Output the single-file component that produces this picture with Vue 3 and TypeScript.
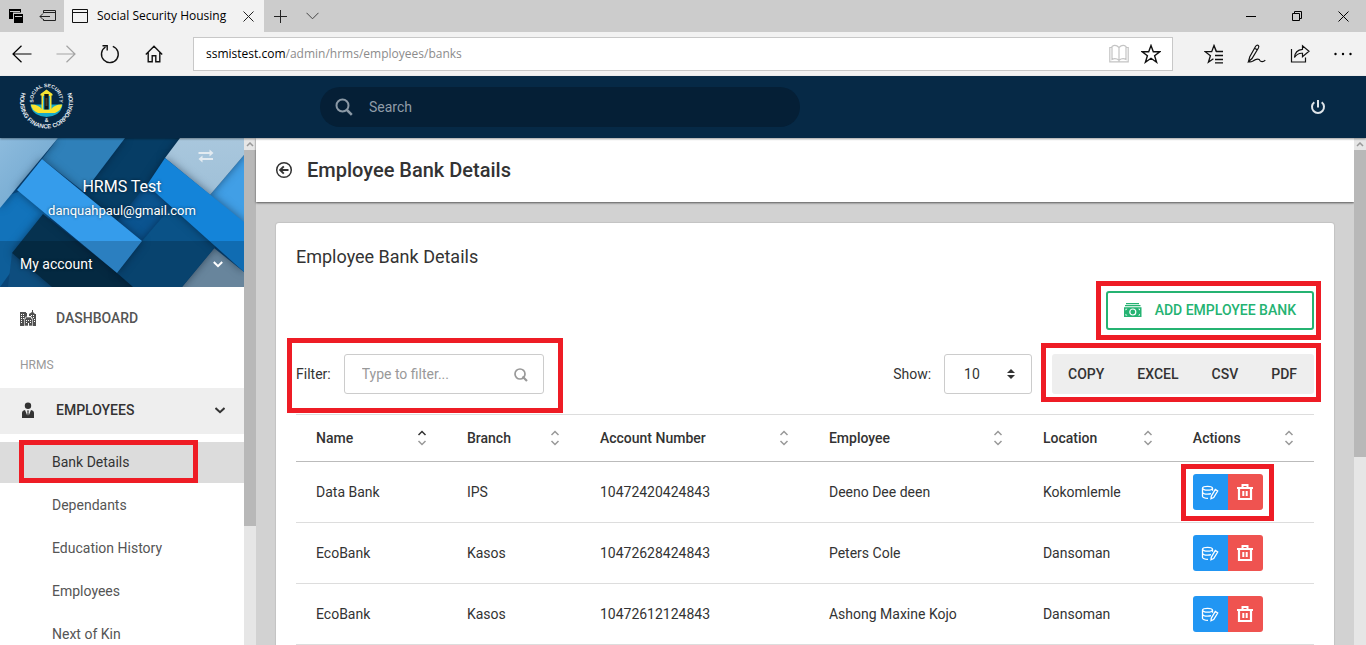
<script setup lang="ts">
import { ref } from 'vue'

interface Column { key: string; label: string; size: string; sorted?: boolean }
interface BankRow { name: string; branch: string; account: string; employee: string; location: string }

const columns: Column[] = [
  { key: 'name', label: 'Name', size: 'c-name', sorted: true },
  { key: 'branch', label: 'Branch', size: 'c-branch' },
  { key: 'account', label: 'Account Number', size: 'c-account' },
  { key: 'employee', label: 'Employee', size: 'c-employee' },
  { key: 'location', label: 'Location', size: 'c-location' },
  { key: 'actions', label: 'Actions', size: 'c-actions' },
]

const rows: BankRow[] = [
  { name: 'Data Bank', branch: 'IPS', account: '10472420424843', employee: 'Deeno Dee deen', location: 'Kokomlemle' },
  { name: 'EcoBank', branch: 'Kasos', account: '10472628424843', employee: 'Peters Cole', location: 'Dansoman' },
  { name: 'EcoBank', branch: 'Kasos', account: '10472612124843', employee: 'Ashong Maxine Kojo', location: 'Dansoman' },
]

const subItems: string[] = ['Bank Details', 'Dependants', 'Education History', 'Employees', 'Next of Kin']
const exportsList: string[] = ['Copy', 'Excel', 'CSV', 'PDF']
const filter = ref('')
const search = ref('')
const pageSize = ref('10')
</script>

<template>
  <div class="window">
    <div class="tabbar">
      <button class="tb-btn first" aria-label="Tabs you have set aside">
        <svg width="16" height="16" viewBox="0 0 16 16"><path d="M1 1h12v3.500H5V11H1z" /><path d="M6 6h9v9H6z" /><path d="M2 3.500h10M7 8.500h7" stroke="#ccc" stroke-width="1" /></svg>
      </button>
      <button class="tb-btn second" aria-label="Set these tabs aside">
        <svg width="18" height="14" viewBox="0 0 18 14" fill="none" stroke="#222"><path d="M4.500 4V1.500h12v10h-12V10M4.500 3.500h12M1 7.500h10M4 4.500l-3 3 3 3" /></svg>
      </button>
      <div class="tab">
        <svg width="16" height="14" viewBox="0 0 16 14" fill="none" stroke="#111"><path d="M.5.5h15v13H.5zM.5 3.500h15" /></svg>
        <span class="tab-title">Social Security Housing</span>
        <button class="tab-close" aria-label="Close tab">
          <svg width="11" height="11" viewBox="0 0 11 11" stroke="#222"><path d="M.5.5l10 10M10.500.5l-10 10" /></svg>
        </button>
      </div>
      <button class="tb-btn plus" aria-label="New tab">
        <svg width="13" height="13" viewBox="0 0 13 13" stroke="#222"><path d="M0 6.500h13M6.500 0v13" /></svg>
      </button>
      <button class="tb-btn plus" aria-label="Tab previews">
        <svg width="13" height="8" viewBox="0 0 13 8" fill="none" stroke="#444"><path d="M.5.8l6 6 6-6" /></svg>
      </button>
      <div class="win-controls">
        <button aria-label="Minimize"><svg width="10" height="10" viewBox="0 0 10 10" stroke="#000"><path d="M0 5.500h10" /></svg></button>
        <button aria-label="Restore"><svg width="10" height="10" viewBox="0 0 10 10" fill="none" stroke="#000"><path d="M.5 2.500h7v7h-7zM2.500 2.500v-2h7v7h-2" /></svg></button>
        <button aria-label="Close"><svg width="11" height="11" viewBox="0 0 11 11" stroke="#000"><path d="M.5.5l10 10M10.500.5l-10 10" /></svg></button>
      </div>
    </div>

    <div class="toolbar">
      <div class="nav-btns">
        <button aria-label="Back"><svg width="20" height="18" viewBox="0 0 20 18" fill="none" stroke="#000" stroke-width="1.2"><path d="M19.500 9H1M9.500 .8L1 9l8.500 8.200" /></svg></button>
        <button aria-label="Forward"><svg width="20" height="18" viewBox="0 0 20 18" fill="none" stroke="#a3a3a3" stroke-width="1.2"><path d="M.5 9H19M10.500 .8L19 9l-8.500 8.200" /></svg></button>
        <button aria-label="Refresh"><svg width="20" height="20" viewBox="0 0 20 20" fill="none" stroke="#111" stroke-width="1.400"><path d="M12.800 2.300A8.400 8.400 0 1 1 5.500 3M2.500 1.700h4.700v4.800" /></svg></button>
        <button aria-label="Home"><svg width="18" height="18" viewBox="0 0 18 18" fill="none" stroke="#111" stroke-width="1.400"><path d="M.8 9.500L9 1.300l8.200 8.200M3.200 7.500v9.300h4v-6h3.600v6h4V7.500" /></svg></button>
      </div>
      <div class="url-box">
        <span class="url"><b>ssmistest.com</b>/admin/hrms/employees/banks</span>
        <button aria-label="Reading view"><svg width="20" height="20" viewBox="0 0 20 20" fill="none" stroke="#c4c4c4" stroke-width="1.200"><path d="M10 3.500Q6.500 0 3 2.500v13q3.500-2 7 .8 3.500-2.800 7-.8v-13Q13.500 0 10 3.500zM10 3.500v14M3 3.500H.8v14.300h18.400V3.500H17" /></svg></button>
        <button aria-label="Add to favorites"><svg width="20" height="20" viewBox="0 0 20 20" fill="none" stroke="#111" stroke-width="1.400"><path d="M10 1.500l2.300 6.200h6.500l-5.200 4 2 6.500L10 14.300l-5.600 3.900 2-6.500-5.200-4h6.500z" /></svg></button>
      </div>
      <div class="right-btns">
        <button aria-label="Hub"><svg width="20" height="20" viewBox="0 0 20 20" fill="none" stroke="#111" stroke-width="1.300"><path d="M19 7.500h-6.500L10 1.500 7.700 7.700H1.200l5.200 4-2 6.500 5-3.400M11 11.500h8M11 15.500h8M11 18.900h8M10 1.500l2.300 6.200" /></svg></button>
        <button aria-label="Notes"><svg width="20" height="20" viewBox="0 0 20 20" fill="none" stroke="#111" stroke-width="1.200"><path d="M1.500 17.500l1.300-4.800L8.500 2.500Q10 .5 11.300 1.500q1 .8.1 2.500L5 14.500zM8 4.500l2.300 1.300M1.500 17.500Q3 18.500 6 17q4-3 6.300-1.400.8 2.200 3 2 1.500 0 3-1.500" /></svg></button>
        <button aria-label="Share"><svg width="20" height="20" viewBox="0 0 20 20" fill="none" stroke="#111" stroke-width="1.200"><path d="M1.500 5v13h14v-4.500M4.500 13.500q.5-7.500 8-8.200V1.800l6.500 5.500-6.500 5.500V9.300q-5-.5-8 4.200z" /></svg></button>
        <button aria-label="More"><svg width="20" height="20" viewBox="0 0 20 20" fill="#000"><circle cx="2.500" cy="10" r="1.200" /><circle cx="10" cy="10" r="1.200" /><circle cx="17.500" cy="10" r="1.200" /></svg></button>
      </div>
    </div>

    <header class="app-header">
      <a href="#" class="logo" aria-label="Social Security and Housing Finance Corporation">
        <svg width="56" height="56" viewBox="0 0 56 56">
          <defs>
            <path id="ring-in" d="M18.500 29.300A13 13 0 1 1 38.500 29.300" />
            <path id="ring-out" d="M5.400 10A26.500 26.500 0 1 0 51.600 10" />
          </defs>
          <g class="logo-text">
            <text font-size="5"><textPath href="#ring-in" startOffset="50%" text-anchor="middle">SOCIAL SECURITY</textPath></text>
            <text font-size="6"><textPath href="#ring-out" startOffset="50%" text-anchor="middle">HOUSING FINANCE CORPORATION</textPath></text>
            <text x="28.500" y="43" font-size="5" text-anchor="middle">&amp;</text>
          </g>
          <path d="M12.500 25.500h32q-.5 6-5.500 9.500-5 3-10.500 3T18 35q-5-3.500-5.500-9.500z" fill="#18a9c9" />
          <path d="M12.800 25.500q7-.5 11 4.500h9.400q4-5 11-4.500-1 6-7.200 8.500h-17q-6.200-2.500-7.200-8.500z" fill="#fbe32b" />
          <path d="M22.500 15l6-4.500 6 4.500v1.500h-1v14h-10v-14h-1z" fill="#f3e334" />
          <path d="M25 17h7v13.500h-7z" fill="#37b4cc" />
          <path d="M26.300 15h4.400v15.500h-4.400z" fill="#10151a" />
          <path d="M27.500 19h2v8h-2z" fill="#4a3a22" />
        </svg>
      </a>
      <label class="search">
        <svg width="18" height="18" viewBox="0 0 18 18" fill="none" stroke="#8b99a6"><circle cx="7.500" cy="7.500" r="6" stroke-width="2" /><path d="M12 12l4.800 4.800" stroke-width="2.500" /></svg>
        <input v-model="search" type="text" placeholder="Search" aria-label="Search" />
      </label>
      <button class="power" aria-label="Log out">
        <svg width="16" height="16" viewBox="0 0 16 16" fill="none" stroke="#dfe5ea" stroke-width="2"><path d="M8 1v7.500M4.300 3.200a6 6 0 1 0 7.400 0" /></svg>
      </button>
    </header>

    <div class="body">
      <aside class="sidebar">
        <div class="profile">
          <svg class="pattern" viewBox="0 0 244 149" preserveAspectRatio="none" aria-hidden="true">
            <defs>
              <linearGradient id="g-light" x1="0" y1="0" x2="1" y2="1"><stop offset="0" stop-color="#8dbbdd" /><stop offset="1" stop-color="#6ba3cc" /></linearGradient>
              <linearGradient id="g-steel" x1="0" y1="0" x2="0" y2="1"><stop offset="0" stop-color="#a9c7dd" /><stop offset="1" stop-color="#9fc0d8" /></linearGradient>
            </defs>
            <rect width="244" height="149" fill="#0b5490" />
            <polygon points="0,60 30,50 50,80 0,149" fill="#1273bb" />
            <polygon points="12,115 60,149 8,149" fill="#125f9a" />
            <polygon points="125,0 182,0 150,42 113,88 80,60" fill="#063d65" class="sh" />
            <polygon points="58,0 125,0 84,54 42,21" fill="#2f80b9" class="sh" />
            <polygon points="0,0 58,0 0,70" fill="url(#g-light)" class="sh" />
            <polygon points="244,17 244,86 210,57" fill="#419fe6" />
            <polygon points="180,0 244,0 244,17 210,57 165,20" fill="url(#g-steel)" class="sh" />
            <polygon points="43,76 12,115 52,149 135,149" fill="#063250" class="sh" />
            <polygon points="214,110 244,134 244,149 182,149" fill="#7fa3bf" />
            <polygon points="172,68 217,107 182,149 133,149 117,135 142,103" fill="#0a5287" class="sh" />
            <polygon points="165,20 244,84 244,134 147,47" fill="#1484d9" class="sh" />
            <polygon points="42,21 142,103 117,135 17,52" fill="#359ceb" class="sh" />
          </svg>
          <div class="profile-top">
            <button class="swap" aria-label="Switch account">
              <svg width="16" height="14" viewBox="0 0 16 14" fill="#e3ebf1"><path d="M.5 3h11V.5L15.500 4l-4 3.500V5H.5zM15 9H4.500V6.500L.5 10l4 3.500V11H15z" /></svg>
            </button>
            <div class="user-name">HRMS Test</div>
            <div class="user-mail">danquahpaul@gmail.com</div>
          </div>
          <button class="account">
            <span>My account</span>
            <svg width="10" height="7" viewBox="0 0 10 7" fill="none" stroke="#fff" stroke-width="2"><path d="M.8 1L5 5.200 9.200 1" /></svg>
          </button>
        </div>

        <nav class="menu">
          <a href="#" class="item">
            <svg width="16" height="16" viewBox="0 0 16 16" fill="#505050"><path d="M0 2h6v1h1v5H5v8H0zM12 0h1v2l2 2h1v12h-4V7h-1V6H9V4l3-2z" /><path d="M5.500 8.500V7h6v1.500h1V16h-8V8.500z" stroke="#fff" stroke-width=".6" /><path d="M1 4h1v1H1zM3 4h1v1H3zM1 6h1v1H1zM3 6h1v1H3zM1 8h1v1H1zM3 8h1v1H3zM1 10h1v1H1zM1 12h1v1H1zM11 5h1v1h-1zM13 5h1v1h-1zM13 7h1v1h-1zM14 9h1v1h-1zM14 11h1v1h-1zM6 10h1v1H6zM8 10h1v1H8zM10 10h1v1h-1zM6 12h1v1H6zM10 12h1v1h-1zM8 13h1v3H8z" fill="#fff" /></svg>
            <span>DASHBOARD</span>
          </a>
          <div class="group-title">HRMS</div>
          <a href="#" class="item open">
            <svg width="16" height="16" viewBox="0 0 16 16" fill="#333"><circle cx="8" cy="3.700" r="3.200" /><path d="M2 16v-5q0-2.500 3-3l2.200 5.500L7.500 10 7 8.500h2L8.500 10l.3 3.500L11 8q3 .5 3 3v5z" /></svg>
            <span>EMPLOYEES</span>
            <svg class="chev" width="10" height="7" viewBox="0 0 10 7" fill="none" stroke="#333" stroke-width="2"><path d="M.5 1L5 5.200 9.500 1" /></svg>
          </a>
          <ul class="submenu">
            <li v-for="(s, i) in subItems" :key="s">
              <a href="#" :class="{ active: i === 0, marked: i === 0 }">{{ s }}</a>
            </li>
          </ul>
        </nav>
      </aside>
      <div class="scrollbar" aria-hidden="true">
        <div class="sb-up"><svg width="8" height="5" viewBox="0 0 8 5" fill="none" stroke="#999" stroke-width="1.500"><path d="M1 4l3-3 3 3" /></svg></div>
        <div class="sb-track"><div class="sb-thumb side"></div></div>
      </div>

      <main class="main">
        <div class="page-head">
          <a href="#" aria-label="Back to previous page">
            <svg width="18" height="18" viewBox="0 0 18 18" fill="none" stroke="#333"><circle cx="9" cy="9" r="7.300" stroke-width="1.500" /><path d="M13.500 9H5.500M8.800 5.300L5.100 9l3.700 3.700" stroke-width="1.900" /></svg>
          </a>
          <h1>Employee Bank Details</h1>
        </div>
        <section class="card">
          <h2>Employee Bank Details</h2>
          <div class="add-row">
            <div class="callout add-mark">
              <button class="add-btn">
                <svg width="18" height="14" viewBox="0 0 18 14" fill="#25b372"><path d="M2 0h13v1.200H2zM1 2h15.500v1.200H1zM0 4.200h17.500V14H0z" /><circle cx="8.800" cy="9" r="3" fill="none" stroke="#fff" stroke-width="1.200" /><path d="M1.500 5.700h2L1.500 7.500zM16 5.700h-2l2 1.800zM1.500 12.500h2l-2-1.800zM16 12.500h-2l2-1.800z" fill="#fff" /></svg>
                <span>ADD EMPLOYEE BANK</span>
              </button>
            </div>
          </div>
          <div class="controls">
            <label class="callout filter filter-mark">
              <span>Filter:</span>
              <span class="filter-box">
                <input v-model="filter" type="text" placeholder="Type to filter..." />
                <svg width="14" height="14" viewBox="0 0 14 14" fill="none" stroke="#999"><circle cx="6" cy="6" r="5" stroke-width="1.700" /><path d="M8.500 8.500l4.500 4.500" stroke-width="2.200" /></svg>
              </span>
            </label>
            <div class="controls-right">
              <label class="show">
                <span>Show:</span>
                <span class="select-box">
                  <select v-model="pageSize"><option>10</option><option>25</option><option>50</option></select>
                  <svg width="8" height="10" viewBox="0 0 8 10" fill="#333"><path d="M0 4l4-4 4 4zM0 6h8l-4 4z" /></svg>
                </span>
              </label>
              <div class="callout exports export-mark">
                <button v-for="e in exportsList" :key="e">{{ e }}</button>
              </div>
            </div>
          </div>
          <table>
            <colgroup><col v-for="c in columns" :key="c.key" :class="c.size" /></colgroup>
            <thead>
              <tr>
                <th v-for="c in columns" :key="c.key" scope="col">
                  <button class="sort">
                    <span>{{ c.label }}</span>
                    <svg width="10" height="16" viewBox="0 0 10 16" fill="none" stroke="#999" stroke-width="1.500"><path d="M1.500 5L5 1.500 8.500 5" :class="{ on: c.sorted }" /><path d="M1.500 11L5 14.500 8.500 11" /></svg>
                  </button>
                </th>
              </tr>
            </thead>
            <tbody>
              <tr v-for="(r, i) in rows" :key="r.account">
                <td>{{ r.name }}</td>
                <td>{{ r.branch }}</td>
                <td>{{ r.account }}</td>
                <td>{{ r.employee }}</td>
                <td>{{ r.location }}</td>
                <td>
                  <div class="actions" :class="{ callout: i === 0, 'action-mark': i === 0 }">
                    <button class="edit" aria-label="Edit">
                      <svg width="18" height="16" viewBox="0 0 18 16" fill="none" stroke="#fff" stroke-width="1.300"><ellipse cx="6.500" cy="4.300" rx="5" ry="1.900" /><path d="M1.500 4.300v8q.5 1.900 5.500 2M11.500 4.300v2.500M1.500 8.300q.8 1.900 5 1.900 2 0 3.500-.5M10 14.800l.3-2.700 4-6.600 2.400 1.500-4 6.600z" /></svg>
                    </button>
                    <button class="del" aria-label="Delete">
                      <svg width="16" height="16" viewBox="0 0 16 16" fill="none" stroke="#fff"><path d="M0 4h16M5.500 3.500v-2.500h5V3.500" stroke-width="2" /><path d="M2 4v11h12V4" stroke-width="2.200" /><path d="M6.300 7v5M9.700 7v5" stroke-width="2" /></svg>
                    </button>
                  </div>
                </td>
              </tr>
            </tbody>
          </table>
        </section>
      </main>
      <div class="scrollbar" aria-hidden="true">
        <div class="sb-up"><svg width="8" height="5" viewBox="0 0 8 5" fill="none" stroke="#999" stroke-width="1.500"><path d="M1 4l3-3 3 3" /></svg></div>
        <div class="sb-track"><div class="sb-thumb page"></div></div>
      </div>
    </div>
  </div>
</template>

<style>
body { background: #d2d2d2; }
</style>

<style scoped>
* { box-sizing: border-box; }
button { border: 0; background: none; padding: 0; font: inherit; color: inherit; cursor: pointer; }
a { color: inherit; text-decoration: none; }
svg { display: block; flex: none; }
.window { height: 100vh; display: flex; flex-direction: column; overflow: hidden; font: 14px/20px Roboto, "Liberation Sans", sans-serif; color: #333; }

.tabbar { flex: none; height: 32px; display: flex; background: #ccc; font: 12px/16px "Open Sans", "Noto Sans", sans-serif; color: #000; }
.tb-btn { display: flex; align-items: center; justify-content: center; width: 32px; }
.tab { display: flex; align-items: center; width: 200px; padding: 0 10px 0 8px; background: #f2f2f2; }
.tab-title { flex: 1; margin-left: 9px; white-space: nowrap; overflow: hidden; }
.win-controls { margin-left: auto; display: flex; }
.win-controls button { width: 46px; display: flex; align-items: center; justify-content: center; }

.toolbar { flex: none; height: 44px; display: flex; align-items: center; background: #f2f2f2; font: 12px/16px "Open Sans", "Noto Sans", sans-serif; }
.nav-btns, .right-btns { display: flex; }
.nav-btns { padding: 0 17px 0 0; }
.nav-btns button { width: 44px; display: flex; justify-content: center; align-items: center; }
.right-btns { padding: 0 2px 0 19px; }
.right-btns button { width: 43px; display: flex; justify-content: center; }
.url-box { flex: 1; height: 34px; display: flex; align-items: center; gap: 12px; padding: 0 11px 0 12px; background: #fff; border: 1px solid #c8c8c8; }
.url { flex: 1; padding-bottom: 1px; color: #8c8c8c; }
.url b { font-weight: 400; color: #000; }

.app-header { flex: none; height: 62px; display: flex; align-items: center; padding: 0 40px 0 18px; background: #062946; position: relative; box-shadow: 0 1px 2px rgba(0, 0, 0, .4); z-index: 1; }
.logo-text { fill: #e6edf2; font-family: "Liberation Sans", sans-serif; font-weight: 700; }
.search { display: flex; align-items: center; gap: 16px; width: 480px; height: 40px; margin-left: 246px; padding: 0 15px; border-radius: 20px; background: #051f36; }
.search input { flex: 1; min-width: 0; border: 0; outline: 0; background: none; padding: 0; font: inherit; color: #fff; }
.search input::placeholder { color: #909ca8; opacity: 1; }
.power { margin-left: auto; }

.body { flex: 1; min-height: 0; display: flex; }
.sidebar { flex: none; width: 244px; overflow: hidden; background: #fff; }
.profile { position: relative; color: #fff; text-shadow: 0 0 3px rgba(0, 0, 0, .6); }
.pattern { position: absolute; inset: 0; width: 100%; height: 100%; }
.sh { filter: drop-shadow(0 0 4px rgba(0, 15, 35, .5)); }
.profile-top { position: relative; height: 103px; text-align: center; }
.swap { display: block; margin-left: 198px; padding-top: 11px; }
.user-name { margin-top: 12px; font-size: 16px; line-height: 24px; }
.user-mail { margin-top: 2px; font-size: 13px; line-height: 20px; }
.account { position: relative; display: flex; align-items: center; justify-content: space-between; width: 100%; height: 46px; padding: 0 21px 0 20px; background: rgba(0, 0, 0, .18); text-shadow: inherit; }
.menu { padding-top: 8px; }
.item { display: flex; align-items: center; gap: 20px; height: 46px; padding: 0 19px 0 20px; font-weight: 500; color: #555; }
.item.open { padding-bottom: 2px; background: #eee; color: #333; }
.chev { margin-left: auto; }
.group-title { height: 47px; padding-left: 20px; font-size: 12px; line-height: 48px; color: #999; }
.submenu { list-style: none; margin: 0; padding: 8px 0; }
.submenu li { margin-bottom: 2px; }
.submenu a { display: flex; align-items: center; height: 41px; padding: 0 0 2px 52px; color: #555; position: relative; }
.submenu a.active { background: #dcdcdc; color: #333; }

.scrollbar { flex: none; width: 12px; display: flex; flex-direction: column; background: #e6e6e6; }
.sb-up { height: 12px; display: flex; align-items: center; justify-content: center; }
.sb-track { flex: 1; }
.sb-thumb { background: #b8b8b8; }
.side { height: 76%; }
.page { height: 62%; }

.main { flex: 1; min-width: 0; display: flex; flex-direction: column; background: #d2d2d2; }
.page-head { flex: none; height: 64px; display: flex; align-items: center; gap: 14px; padding-left: 19px; background: #fff; box-shadow: 0 1px 2px rgba(0, 0, 0, .6); }
h1 { margin: 0; font-size: 20px; line-height: 24px; font-weight: 500; }
.card { flex: 1 0 auto; margin: 21px 20px 0; padding: 20px; background: #fff; border-radius: 3px 3px 0 0; box-shadow: 0 0 1px 1px rgba(0, 0, 0, .07); }
h2 { margin: 0 0 20px; font-size: 18px; line-height: 28px; font-weight: 400; }

.callout { position: relative; }
.callout::after, .marked::after { content: ""; position: absolute; border: 5px solid #ee1c25; pointer-events: none; z-index: 2; }
.add-mark::after { inset: -10px -7px -10px -10px; }
.filter-mark::after { inset: -16px -19px -19px -9px; }
.export-mark::after { inset: -11px -7px -8px -11px; }
.action-mark::after { inset: -10px -11px -11px -12px; }
.marked::after { inset: -2px 46px 0 19px; }

.add-row { display: flex; justify-content: flex-end; }
.add-btn { display: flex; align-items: center; gap: 13px; height: 39px; padding: 0 16px 1px; border: 2px solid #25b372; border-radius: 3px; color: #25b372; font-weight: 500; }
.controls { display: flex; justify-content: space-between; margin: 24px 0 20px; }
.filter, .show { display: flex; align-items: center; gap: 13px; }
.filter-box, .select-box { position: relative; display: block; }
.filter-box input { display: block; width: 200px; height: 40px; padding: 0 36px 0 17px; border: 1px solid #ccc; border-radius: 3px; background: #fff; font: inherit; color: #333; }
.filter-box input::placeholder { color: #999; opacity: 1; }
.filter-box svg { position: absolute; right: 16px; top: 14px; }
.controls-right { display: flex; gap: 20px; }
.select-box select { display: block; width: 88px; height: 40px; padding: 0 19px; border: 1px solid #ccc; border-radius: 3px; background: #fff; appearance: none; font: inherit; color: #333; }
.select-box svg { position: absolute; right: 17px; top: 15px; pointer-events: none; }
.exports { display: flex; height: 40px; background: #eee; border-radius: 3px; }
.exports button { padding: 0 17px 0 16px; font-weight: 500; text-transform: uppercase; }

table { width: 100%; table-layout: fixed; border-collapse: separate; border-spacing: 0; }
.c-name { width: 14.830%; }
.c-branch { width: 13.060%; }
.c-account { width: 22.500%; }
.c-employee { width: 21.020%; }
.c-location { width: 14.730%; }
.c-actions { width: 13.860%; }
th { height: 48px; padding: 0 20px; border-top: 1px solid #ddd; border-bottom: 1px solid #bbb; font-weight: 500; text-align: left; }
.sort { display: flex; align-items: center; justify-content: space-between; width: 100%; }
.on { stroke: #333; }
td { height: 61px; padding: 0 20px; border-bottom: 1px solid #ddd; }
.actions { display: flex; width: 70px; height: 36px; }
.actions button { flex: 1; display: flex; align-items: center; justify-content: center; }
.edit { background: #2196f3; border-radius: 3px 0 0 3px; }
.del { background: #ef5350; border-radius: 0 3px 3px 0; }
</style>
